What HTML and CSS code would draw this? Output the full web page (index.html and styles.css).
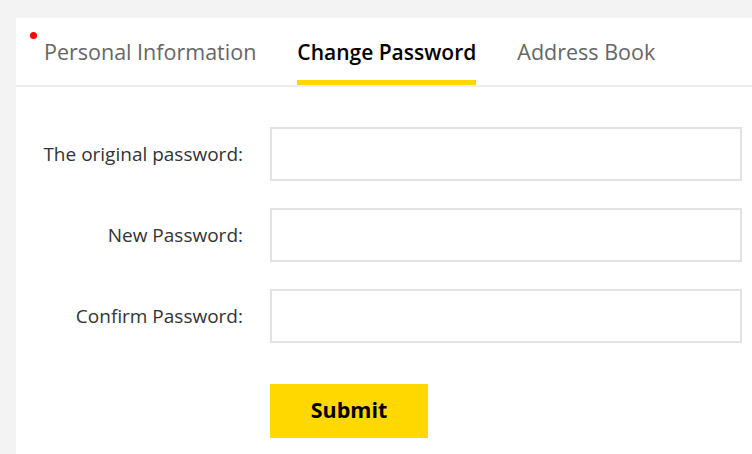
FILE: index.html
```html
<!DOCTYPE html>
<html lang="en">
     <head>
          <meta charset="UTF-8">
          <meta name="viewport" content="width=device-width, initial-scale=1.0">
          <title>Change Password</title>
          <link rel="stylesheet" href="styles.css">
     </head>
     <body>
          <div class="panel">
               <div class="tabs">
                    <a class="tab has-dot" href="#">Personal Information</a>
                    <a class="tab active" href="#">Change Password</a>
                    <a class="tab" href="#">Address Book</a>
               </div>
               <form class="pwd-form">
                    <div class="row">
                         <label for="oldPwd">The original password:</label>
                         <input type="password" id="oldPwd">
                    </div>
                    <div class="row">
                         <label for="newPwd">New Password:</label>
                         <input type="password" id="newPwd">
                    </div>
                    <div class="row">
                         <label for="confirmPwd">Confirm Password:</label>
                         <input type="password" id="confirmPwd">
                    </div>
                    <div class="row">
                         <span></span>
                         <button type="button" class="submit-btn">Submit</button>
                    </div>
               </form>
          </div>
     </body>
</html>
```

FILE: styles.css
```css
body {
     font-family: "Open Sans", Arial, sans-serif;
     background-color: #f3f3f3;
     margin: 0;
     padding: 18px 0 0 16px;
}
.panel {
     background-color: #fff;
     min-height: 436px;
}
.tabs {
     display: flex;
     gap: 41px;
     padding-left: 28px;
     border-bottom: 2px solid #eee;
}
.tab {
     position: relative;
     display: block;
     height: 62px;
     line-height: 68px;
     font-size: 21.5px;
     color: #666;
     text-decoration: none;
     border-bottom: 5px solid transparent;
}
.tab.active {
     color: #000;
     font-size: 21px;
     font-weight: 600;
     border-bottom-color: #ffd800;
}
.tab.has-dot::before {
     content: "";
     position: absolute;
     left: -14px;
     top: 14px;
     width: 7px;
     height: 7px;
     border-radius: 50%;
     background-color: #f00;
}
.pwd-form {
     padding-top: 40px;
}
.row {
     display: grid;
     grid-template-columns: 227px 472px;
     column-gap: 27px;
     align-items: center;
     margin-bottom: 27px;
}
.row label {
     text-align: right;
     font-size: 19px;
     color: #333;
}
.row input {
     box-sizing: border-box;
     height: 54px;
     border: 2px solid #e2e2e2;
     outline: none;
     padding: 0 12px;
}
.submit-btn {
     width: 158px;
     height: 54px;
     margin-top: 14px;
     padding: 0 0 4px;
     border: none;
     background-color: #ffd800;
     color: #000;
     font-family: "Open Sans", Arial, sans-serif;
     font-size: 21.5px;
     font-weight: 700;
     cursor: pointer;
}
```
